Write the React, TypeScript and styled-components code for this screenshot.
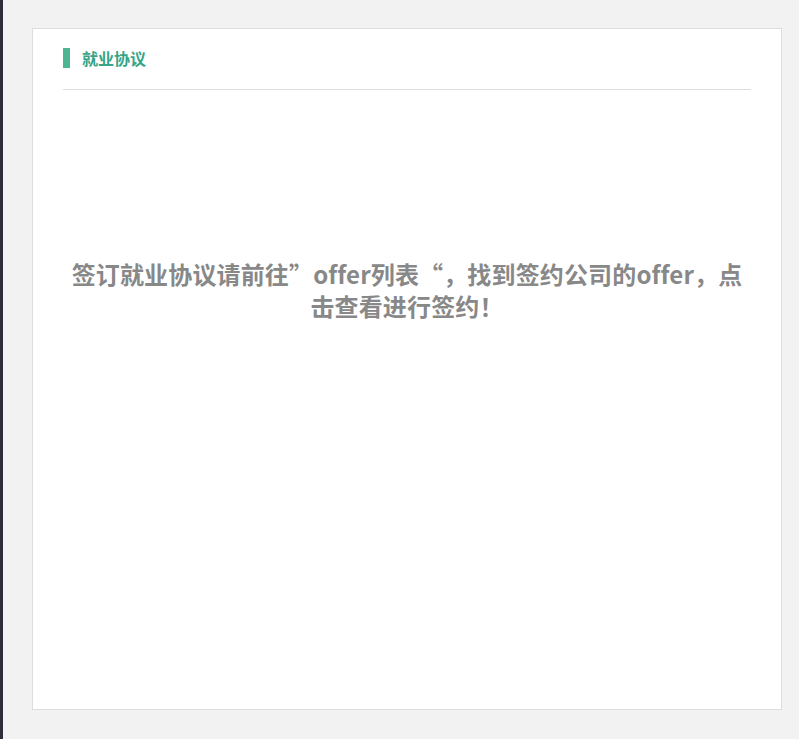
import React from "react";
import styled, { createGlobalStyle } from "styled-components";

const Global = createGlobalStyle`
  html, body {
    margin: 0;
    padding: 0;
    background: #f2f2f2;
  }
  body {
    font-family: "Noto Sans CJK SC", "Noto Sans", sans-serif;
  }
`;

const Page = styled.div`
  min-height: 739px;
  box-sizing: border-box;
  border-left: 3px solid #2f2d3a;
  padding: 28px 17px 0 29px;
  background: #f2f2f2;
`;

const Card = styled.section`
  width: 750px;
  height: 682px;
  box-sizing: border-box;
  background: #ffffff;
  border: 1px solid #dddddd;
  padding: 0 30px;
  display: flex;
  flex-direction: column;
`;

const Header = styled.header`
  display: flex;
  align-items: center;
  gap: 12px;
  height: 20px;
  padding: 19px 0 21px;
  border-bottom: 1px solid #dddddd;
`;

const Marker = styled.span`
  width: 7px;
  height: 20px;
  background: #4cb592;
`;

const Title = styled.h2`
  margin: 0;
  font-size: 16px;
  line-height: 20px;
  font-weight: 700;
  color: #35a487;
`;

const Body = styled.div`
  flex: 1;
  padding-top: 168px;
`;

const Notice = styled.p`
  margin: 0;
  text-align: center;
  font-size: 24px;
  line-height: 32px;
  letter-spacing: 0.15px;
  font-weight: 700;
  color: #888888;
`;

export default function App() {
  return (
    <>
      <Global />
      <Page>
        <Card>
          <Header>
            <Marker />
            <Title>就业协议</Title>
          </Header>
          <Body>
            <Notice>
              签订就业协议请前往”offer列表“，找到签约公司的offer，点
              <br />
              击查看进行签约！
            </Notice>
          </Body>
        </Card>
      </Page>
    </>
  );
}
